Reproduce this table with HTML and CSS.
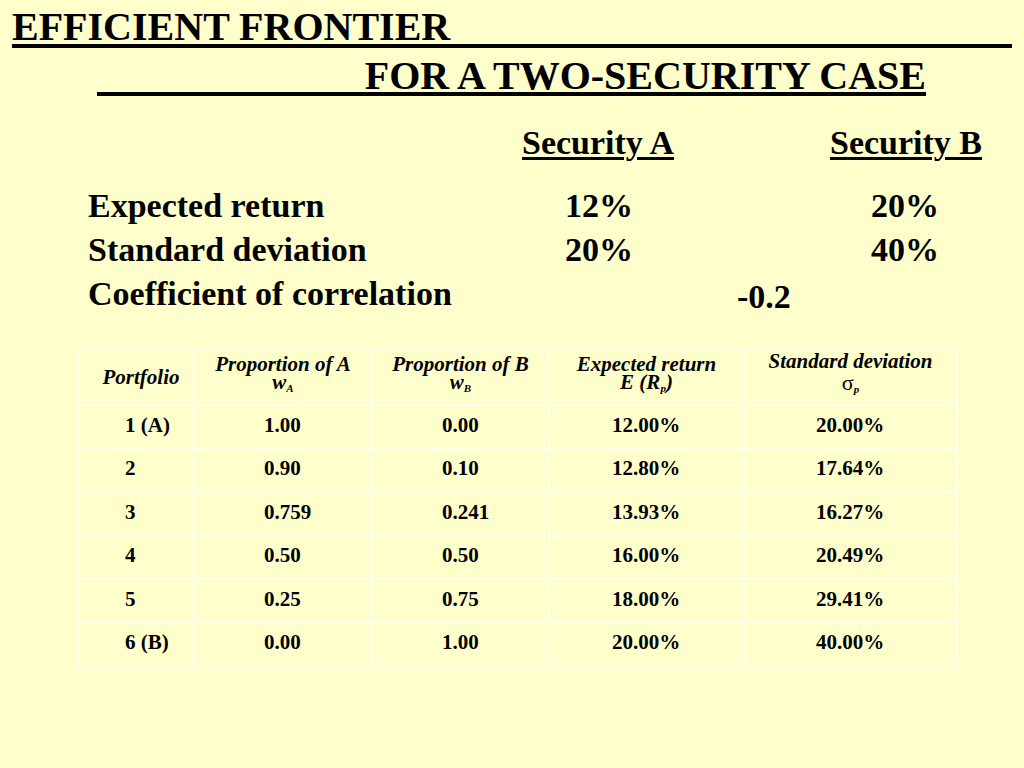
FILE: index.html
```html
<!DOCTYPE html>
<html>
<head>
<meta charset="utf-8">
<title>Efficient Frontier</title>
<link rel="stylesheet" href="styles.css">
</head>
<body>
<div class="slide">
  <h1 class="title">
    <span class="t1">EFFICIENT FRONTIER</span>
    <span class="t2">FOR A TWO-SECURITY CASE</span>
  </h1>

  <div class="sec-head">
    <div></div>
    <div class="sec">Security A</div>
    <div></div>
    <div class="sec">Security B</div>
  </div>

  <div class="values">
    <div class="label">Expected return</div>
    <div class="num">12%</div>
    <div></div>
    <div class="num">20%</div>

    <div class="label">Standard deviation</div>
    <div class="num">20%</div>
    <div></div>
    <div class="num">40%</div>

    <div class="label">Coefficient of correlation</div>
    <div></div>
    <div class="corr">-0.2</div>
    <div></div>
  </div>

  <table class="grid">
    <colgroup>
      <col class="c1"><col class="c2"><col class="c3"><col class="c4"><col class="c5">
    </colgroup>
    <thead>
      <tr class="head">
        <th class="pf">Portfolio</th>
        <th>Proportion of A<br>w<sub>A</sub></th>
        <th>Proportion of B<br>w<sub>B</sub></th>
        <th>Expected return<br>E (R<sub>p</sub>)</th>
        <th class="sd">Standard deviation<br><span class="sigma">σ</span><sub>p</sub></th>
      </tr>
    </thead>
    <tbody>
      <tr><td>1 (A)</td><td>1.00</td><td>0.00</td><td>12.00%</td><td>20.00%</td></tr>
      <tr><td>2</td><td>0.90</td><td>0.10</td><td>12.80%</td><td>17.64%</td></tr>
      <tr><td>3</td><td>0.759</td><td>0.241</td><td>13.93%</td><td>16.27%</td></tr>
      <tr><td>4</td><td>0.50</td><td>0.50</td><td>16.00%</td><td>20.49%</td></tr>
      <tr><td>5</td><td>0.25</td><td>0.75</td><td>18.00%</td><td>29.41%</td></tr>
      <tr><td>6 (B)</td><td>0.00</td><td>1.00</td><td>20.00%</td><td>40.00%</td></tr>
    </tbody>
  </table>
</div>
</body>
</html>
```

FILE: styles.css
```css
html, body {
  margin: 0;
  padding: 0;
  background: #FFFFCC;
}

body {
  font-family: "Liberation Serif", "Times New Roman", serif;
  color: #000;
  width: 1024px;
  height: 768px;
  overflow: hidden;
}

.slide {
  padding-top: 9px;
}

.title {
  margin: 0;
  font-size: 40px;
  font-weight: bold;
}

.t1 {
  display: block;
  width: 1000px;
  margin-left: 12px;
  line-height: 35px;
  height: 35px;
  border-bottom: 4px solid #000;
  white-space: nowrap;
}

.t2 {
  display: block;
  width: 829px;
  margin: 11px 0 0 97px;
  line-height: 33px;
  height: 33px;
  border-bottom: 4px solid #000;
  text-align: right;
  white-space: nowrap;
}

.sec-head,
.values {
  display: grid;
  grid-template-columns: 434px 154px 154px 150px;
  margin-left: 88px;
  font-size: 34px;
  font-weight: bold;
  line-height: 44px;
}

.sec-head {
  margin-top: 25px;
}

.values {
  margin-top: 19px;
}

.sec {
  text-decoration: underline;
  text-decoration-thickness: 3px;
  text-underline-offset: 3px;
  white-space: nowrap;
}

.label {
  white-space: nowrap;
}

.num {
  text-align: center;
}

.corr {
  padding-left: 61px;
  padding-top: 3px;
  white-space: nowrap;
}

.grid {
  border-collapse: collapse;
  table-layout: fixed;
  width: 879px;
  margin: 28px 0 0 77px;
  font-size: 21px;
  font-weight: bold;
}

.c1 { width: 116px; }
.c2 { width: 178px; }
.c3 { width: 177px; }
.c4 { width: 195px; }
.c5 { width: 213px; }

.grid th,
.grid td {
  border: 2px solid #FFFFEE;
  padding: 0;
}

.grid th {
  font-style: italic;
  font-size: 21px;
  line-height: 18px;
  text-align: center;
  vertical-align: top;
  white-space: nowrap;
  padding-top: 6px;
}

.grid th.pf {
  vertical-align: middle;
  padding-top: 0;
  padding-left: 10px;
}

.grid th.sd {
  line-height: 22px;
  padding-top: 1px;
}

.grid sub {
  font-size: 11px;
  vertical-align: -3px;
  line-height: 0;
}

.sigma {
  font-style: normal;
  font-weight: normal;
  font-size: 22px;
}

.head {
  height: 57px;
}

.grid tbody tr {
  height: 43.5px;
}

.grid td {
  white-space: nowrap;
  vertical-align: middle;
  padding-bottom: 3px;
}

.grid td:nth-child(1) { padding-left: 46px; }
.grid td:nth-child(2) { padding-left: 69px; }
.grid td:nth-child(3) { padding-left: 69px; }
.grid td:nth-child(4) { padding-left: 62px; }
.grid td:nth-child(5) { padding-left: 71px; }
```
